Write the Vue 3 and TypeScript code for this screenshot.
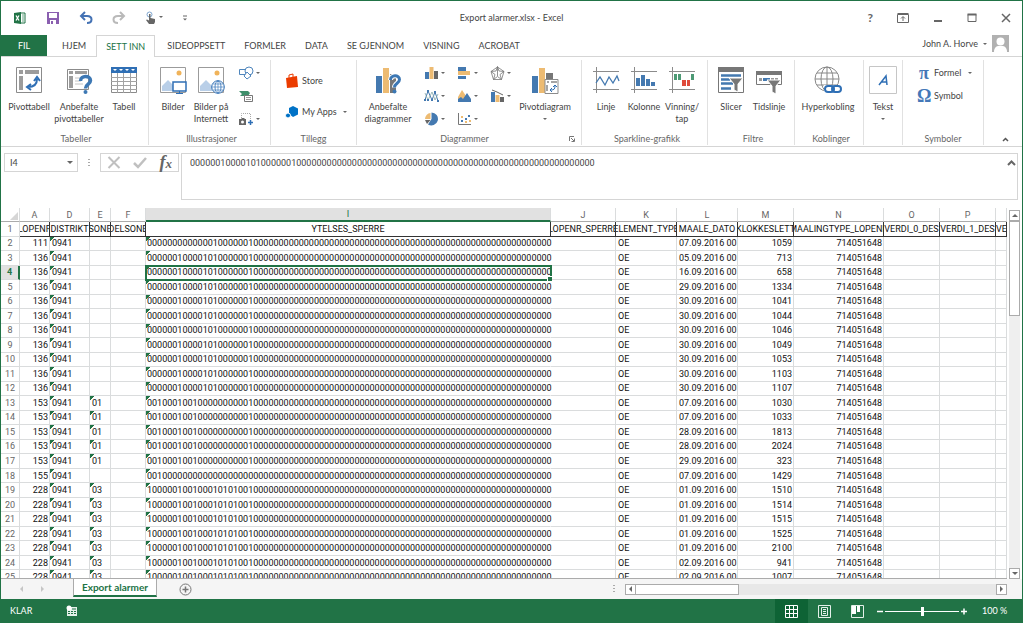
<script setup lang="ts">
import { ref } from 'vue'

interface Row {
  n: number
  a: string
  e: string
  i: string
  date: string
  time: string
}

const bits = (ones: number[]): string =>
  Array.from({ length: 80 }, (_, k) => (ones.includes(k) ? '1' : '0')).join('')

const patterns = {
  first: bits([13, 20]),
  second: bits([6, 11, 13, 20]),
  third: bits([2, 6, 9, 20]),
  fourth: bits([2]),
  fifth: bits([0, 6, 9, 13, 15, 17, 20]),
}

const source: [string, string, keyof typeof patterns, string, string][] = [
  ['111', '', 'first', '07.09.2016', '1059'],
  ['136', '', 'second', '05.09.2016', '713'],
  ['136', '', 'second', '16.09.2016', '658'],
  ['136', '', 'second', '29.09.2016', '1334'],
  ['136', '', 'second', '30.09.2016', '1041'],
  ['136', '', 'second', '30.09.2016', '1044'],
  ['136', '', 'second', '30.09.2016', '1046'],
  ['136', '', 'second', '30.09.2016', '1049'],
  ['136', '', 'second', '30.09.2016', '1053'],
  ['136', '', 'second', '30.09.2016', '1103'],
  ['136', '', 'second', '30.09.2016', '1107'],
  ['153', '01', 'third', '07.09.2016', '1030'],
  ['153', '01', 'third', '07.09.2016', '1033'],
  ['153', '01', 'third', '28.09.2016', '1813'],
  ['153', '01', 'third', '28.09.2016', '2024'],
  ['153', '01', 'third', '29.09.2016', '323'],
  ['155', '', 'fourth', '07.09.2016', '1429'],
  ['228', '03', 'fifth', '01.09.2016', '1510'],
  ['228', '03', 'fifth', '01.09.2016', '1514'],
  ['228', '03', 'fifth', '01.09.2016', '1515'],
  ['228', '03', 'fifth', '01.09.2016', '1525'],
  ['228', '03', 'fifth', '01.09.2016', '2100'],
  ['228', '03', 'fifth', '02.09.2016', '941'],
  ['228', '03', 'fifth', '02.09.2016', '1007'],
]

const rows: Row[] = source.map(([a, e, p, date, time], k) => ({
  n: k + 2, a, e, i: patterns[p], date: date + ' 00', time,
}))

const columns = [
  { id: 'A', title: 'LOPENR' },
  { id: 'D', title: 'DISTRIKT' },
  { id: 'E', title: 'SONE' },
  { id: 'F', title: 'DELSONE' },
  { id: 'I', title: 'YTELSES_SPERRE' },
  { id: 'J', title: 'LOPENR_SPERRE' },
  { id: 'K', title: 'ELEMENT_TYPE' },
  { id: 'L', title: 'MAALE_DATO' },
  { id: 'M', title: 'KLOKKESLETT' },
  { id: 'N', title: 'MAALINGTYPE_LOPENR' },
  { id: 'O', title: 'VERDI_0_DES' },
  { id: 'P', title: 'VERDI_1_DES' },
  { id: '', title: 'VE' },
]

const tabs = ['HJEM', 'SETT INN', 'SIDEOPPSETT', 'FORMLER', 'DATA', 'SE GJENNOM', 'VISNING', 'ACROBAT']
const activeTab = ref('SETT INN')
const formula = ref(patterns.second)
const cellName = ref('I4')
const zoom = ref(50)
</script>

<template>
  <div class="window">
    <header class="titlebar">
      <div class="qat">
        <svg class="logo" width="14" height="14" viewBox="0 0 14 14"><path d="M7 2h5v10H7z" fill="#fff" stroke="#217346" /><path d="M9 4h2M9 6h2M9 8h2M9 10h2" stroke="#6aa685" /><path d="M1 2l7-1v12l-7-1z" fill="#217346" /><path d="M3 4.500l3 5M6 4.500l-3 5" stroke="#fff" stroke-width="1.300" /></svg>
        <button aria-label="Lagre"><svg width="14" height="14" viewBox="0 0 14 14"><path d="M1 1h12v12H1z" fill="#8a5fb0" /><path d="M3 2h8v5H3z" fill="#fff" /><path d="M4 9h6v4H4z" fill="#fff" /><path d="M5 10h2v3H5z" fill="#8a5fb0" /></svg></button>
        <button aria-label="Angre"><svg width="14" height="14" viewBox="0 0 14 14" fill="none" stroke="#4472b4" stroke-width="2"><path d="M6 1L2 5l4 4M2 5h6c6 0 6 7 0 7" /></svg></button>
        <button aria-label="Gjør om"><svg width="14" height="14" viewBox="0 0 14 14" fill="none" stroke="#b9b9b9" stroke-width="2"><path d="M8 1l4 4-4 4M12 5H6c-6 0-6 7 0 7" /></svg></button>
        <button class="touch" aria-label="Berøringsmodus"><svg width="18" height="14" viewBox="0 0 18 14"><circle cx="4.500" cy="3.500" r="2.500" fill="none" stroke="#7fa6cf" /><path d="M4 3h1.500v4L10 8v3l-1 2H4L1 9l1-.5 2 1z" fill="#666" /><path d="M14 5h4l-2 2z" fill="#666" /></svg></button>
        <button aria-label="Tilpass verktøylinjen"><svg width="6" height="7" viewBox="0 0 6 7"><path d="M1 1h4" stroke="#666" /><path d="M1 3.500h4l-2 2z" fill="#666" /></svg></button>
      </div>
      <h1>Export alarmer.xlsx - Excel</h1>
      <div class="controls">
        <button class="help" aria-label="Hjelp">?</button>
        <button aria-label="Visningsalternativer"><svg width="12" height="10" viewBox="0 0 12 10" fill="none" stroke="#666"><path d="M.5 1.500h11v8H.5zM.5 .5h11M6 8V4M4 5.500l2-2 2 2" /></svg></button>
        <button aria-label="Minimer"><svg width="10" height="10" viewBox="0 0 10 10"><path d="M1 8h8" stroke="#666" stroke-width="2" /></svg></button>
        <button aria-label="Maksimer"><svg width="10" height="10" viewBox="0 0 10 10"><path d="M1 1.500h8v7H1z" fill="none" stroke="#666" /><path d="M.5 1.500h9" stroke="#666" stroke-width="2" /></svg></button>
        <button aria-label="Lukk"><svg width="10" height="10" viewBox="0 0 10 10"><path d="M1 1l8 8M9 1L1 9" stroke="#666" stroke-width="1.500" /></svg></button>
      </div>
    </header>

    <nav class="tabs">
      <button class="file">FIL</button>
      <button v-for="t in tabs" :key="t" class="tab" :class="{ active: t === activeTab }" @click="activeTab = t">{{ t }}</button>
      <button class="user">
        <span>John A. Horve</span><i class="caret"></i>
        <svg width="17" height="17" viewBox="0 0 17 17"><path d="M0 0h17v17H0z" fill="#b1b1b1" /><circle cx="8.500" cy="6.500" r="4" fill="#fff" /><path d="M2 17c0-4 2-5.500 4-6h5c2 .5 4 2 4 6z" fill="#fff" /></svg>
      </button>
    </nav>

    <section class="ribbon">
      <div class="group g-tables">
        <div class="tools">
          <button class="big w50"><svg width="28" height="28" viewBox="0 0 28 28"><path d="M1.500 1.500h25v25h-25z" fill="#fff" stroke="#8b8b8b" /><path d="M4 4h4v4H4zM10 4h14v4H10zM4 10h4v14H4z" fill="#9c9c9c" /><path d="M13 21c6 0 9-3 9-8M19 15l3-4 3 4M16 18l-4 3 4 3" fill="none" stroke="#2f6fb5" stroke-width="2" /></svg><span>Pivottabell</span></button>
          <button class="big w50"><svg width="28" height="28" viewBox="0 0 28 28"><path d="M2.500 3.500h21v20h-21z" fill="#fff" stroke="#8b8b8b" /><path d="M4 5h4v3H4zM10 5h12v3H10zM4 10h4v12H4z" fill="#9c9c9c" /><path d="M10 12h6M10 15h6M10 18h8" stroke="#c4c4c4" /><path d="M15.500 15c0-6 10-6 10-.5 0 4-5 3.500-5 8" fill="none" stroke="#3d78b4" stroke-width="3.500" /><circle cx="20.500" cy="26" r="2" fill="#3d78b4" /></svg><span>Anbefalte<br>pivottabeller</span></button>
          <button class="big w40"><svg width="28" height="28" viewBox="0 0 28 28"><path d="M1.500 1.500h25v25h-25z" fill="#fff" stroke="#8b8b8b" /><path d="M1 1h26v6H1z" fill="#2f6fb5" /><path d="M3 3h4l-2 2zM9 3h4l-2 2zM15 3h4l-2 2zM21 3h4l-2 2z" fill="#fff" /><path d="M1 11.500h26M1 15.500h26M1 19.500h26M1 23.500h26M7.500 7v20M13.500 7v20M20.500 7v20" stroke="#a3a3a3" /></svg><span>Tabell</span></button>
        </div>
        <h2>Tabeller</h2>
      </div>

      <div class="group g-illus">
        <div class="tools">
          <button class="big w40"><svg width="28" height="28" viewBox="0 0 28 28"><path d="M1.500 1.500h25v25h-25z" fill="#fff" stroke="#9b9b9b" /><circle cx="20" cy="7" r="2.500" fill="#f0b35a" /><path d="M3 25v-5l6-6 6 6v5z" fill="#b9cfe8" /><path d="M14 16h13v9H14z" fill="#fff" stroke="#2f6fb5" stroke-width="1.500" /><path d="M20.500 25v2M17 27.500h7" stroke="#2f6fb5" /></svg><span>Bilder</span></button>
          <button class="big w36"><svg width="28" height="28" viewBox="0 0 28 28"><path d="M1.500 1.500h25v25h-25z" fill="#fff" stroke="#9b9b9b" /><circle cx="20" cy="7" r="2.500" fill="#f0b35a" /><path d="M3 25v-5l6-6 6 6v5z" fill="#b9cfe8" /><circle cx="21" cy="21" r="6.300" fill="#fff" stroke="#2f6fb5" /><ellipse cx="21" cy="21" rx="3" ry="6" fill="none" stroke="#2f6fb5" stroke-width=".8" /><path d="M15 21h12M16 18h10M16 24h10M21 15v12" stroke="#2f6fb5" stroke-width=".6" /></svg><span>Bilder på<br>Internett</span></button>
          <div class="stack">
            <button aria-label="Figurer"><svg width="15" height="14" viewBox="0 0 15 14" fill="#fff" stroke="#4f86bd"><path d="M.5 3.500h8v5h-8z" /><circle cx="10" cy="5" r="4" /><path d="M8 6l4 4-4 3-3-3z" /></svg><i class="caret"></i></button>
            <button aria-label="SmartArt"><svg width="15" height="14" viewBox="0 0 15 14"><path d="M0 2h9l2 2-2 3H1l2-2z" fill="#3f8f6b" /><path d="M5.500 6.500h8v6h-8z" fill="#fff" stroke="#777" /><path d="M7 8.500h5M7 10.500h5" stroke="#999" /></svg></button>
            <button aria-label="Skjermbilde"><svg width="15" height="14" viewBox="0 0 15 14"><path d="M2.500 6V1.500h9V7" fill="none" stroke="#aaa" stroke-dasharray="1 1" /><path d="M0 7h2l1-1h2l1 1h1v6H0z" fill="#666" /><circle cx="3.500" cy="10" r="1.500" fill="#fff" /><path d="M9 10.500h5M11.500 8v5" stroke="#2f6fb5" stroke-width="1.500" /></svg><i class="caret"></i></button>
          </div>
        </div>
        <h2>Illustrasjoner</h2>
      </div>

      <div class="group g-apps">
        <div class="tools apps">
          <button><svg width="14" height="16" viewBox="0 0 14 16"><path d="M1 5l11-2 1 11-11 1z" fill="#eb3c00" /><path d="M4 6V2l4-1v4" fill="none" stroke="#eb3c00" /></svg><span>Store</span></button>
          <button><svg width="14" height="14" viewBox="0 0 14 14" fill="#0072c6"><path d="M8 1l5 2.500v6L8 12 4 9V3z" /><circle cx="3" cy="10.500" r="2.500" stroke="#fff" /></svg><span>My Apps</span><i class="caret"></i></button>
        </div>
        <h2>Tillegg</h2>
      </div>

      <div class="group g-charts">
        <div class="tools">
          <button class="big w56"><svg width="28" height="28" viewBox="0 0 28 28"><path d="M2 10h6v17H2z" fill="#4479b0" /><path d="M9 2h6v25H9z" fill="#edbb72" /><path d="M16 8h6v19h-6z" fill="#777" /><path d="M16.500 14c0-5.500 9-5.500 9-.5 0 4-5 3.500-5 8" fill="none" stroke="#fff" stroke-width="5" /><path d="M16.500 14c0-5.500 9-5.500 9-.5 0 4-5 3.500-5 8" fill="none" stroke="#3d78b4" stroke-width="3" /><circle cx="20.500" cy="25.500" r="2" fill="#3d78b4" /></svg><span>Anbefalte<br>diagrammer</span></button>
          <div class="charts">
            <button aria-label="Stolpe"><svg width="15" height="14" viewBox="0 0 15 14"><path d="M1 6h4v7H1z" fill="#4479b0" /><path d="M5.500 1h4v12h-4z" fill="#edbb72" /><path d="M10 5h4v8h-4z" fill="#666" /></svg><i class="caret"></i></button>
            <button aria-label="Liggende stolpe"><svg width="15" height="14" viewBox="0 0 15 14"><path d="M1 1h8v4H1zM1 10h8v3H1z" fill="#4479b0" /><path d="M1 5h12v4H1z" fill="#edbb72" /></svg><i class="caret"></i></button>
            <button aria-label="Radar"><svg width="15" height="14" viewBox="0 0 15 14" fill="none" stroke="#777" stroke-width=".8"><path d="M7.500 .5L9 5l5 .5-4 3 1.500 5-4-3-4 3L5 8.500l-4-3L6 5zM7.500 1l6.500 4.500-2.500 8h-8L1 5.500zM7.500 1v9" /></svg><i class="caret"></i></button>
            <button aria-label="Linje"><svg width="15" height="14" viewBox="0 0 15 14" fill="none" stroke="#4479b0"><path d="M1 11l3-9 4 9 3-8 3 9" /><path d="M1 4l3 7 4-8 3 8 3-6" stroke="#8aa" stroke-width=".8" /><path d="M3 2h2M7 11h2M10 3h2M0 11h2M3 11h2M13 12h2" stroke-width="2" /></svg><i class="caret"></i></button>
            <button aria-label="Areal"><svg width="15" height="14" viewBox="0 0 15 14"><path d="M1 8l4-7 4 6v6H1z" fill="#edbb72" /><path d="M1 13V10l3-2 2 2 4-6 4 6v3z" fill="#4479b0" /></svg><i class="caret"></i></button>
            <button aria-label="Kombinasjon"><svg width="15" height="14" viewBox="0 0 15 14"><path d="M1 3h4v10H1z" fill="#4479b0" /><path d="M5.500 6h4v7h-4z" fill="#edbb72" /><path d="M10 8h4v5h-4z" fill="#666" /><path d="M2 1l5 2 6 3" fill="none" stroke="#666" /></svg><i class="caret"></i></button>
            <button aria-label="Sektor"><svg width="15" height="14" viewBox="0 0 15 14"><path d="M7.500 7V.5A6.500 6.500 0 1 1 4 12.500z" fill="#4479b0" /><path d="M6.500 7H1A6 6 0 0 1 6.500 1z" fill="#edbb72" /><path d="M1 8h5.500L3 12z" fill="#666" /></svg><i class="caret"></i></button>
            <button aria-label="Punkt"><svg width="15" height="14" viewBox="0 0 15 14"><path d="M1.500 1v11.500H14" fill="none" stroke="#777" /><path d="M4 8h2v2H4zM8 6h2v2H8zM11 3h2v2h-2z" fill="#4479b0" /><path d="M4 4h2v2H4zM8 9h2v2H8zM12 8h2v2h-2z" fill="#edbb72" /></svg><i class="caret"></i></button>
          </div>
          <button class="big w54"><svg width="28" height="28" viewBox="0 0 28 28"><path d="M1 10h6v17H1z" fill="#4479b0" /><path d="M8 2h6v25H8z" fill="#edbb72" /><path d="M15 7h7v8h-7z" fill="#777" /><path d="M14 13.500h13v14H14z" fill="#fff" stroke="#8b8b8b" /><path d="M16 16h2M20 16h6M16 19v6" stroke="#888" stroke-width="1.500" /><path d="M20 24c3 0 4-1 4-4M22 21l2-2 2 2M21 22l-2 2 2 2" fill="none" stroke="#2f6fb5" /></svg><span>Pivotdiagram</span><i class="caret"></i></button>
        </div>
        <div class="foot"><h2>Diagrammer</h2><button class="launcher" aria-label="Flere diagrammer"><svg width="6" height="6" viewBox="0 0 6 6" fill="none" stroke="#777"><path d="M.5 5V.5H5M2 2l3 3M5.500 2.500v3h-3" /></svg></button></div>
      </div>

      <div class="group g-spark">
        <div class="tools">
          <button class="big w38"><svg width="28" height="28" viewBox="0 0 28 28" fill="none"><path d="M4.500 1v26M1 5.500h26M1 23.500h26" stroke="#8b8b8b" /><path d="M4 17l4-6 5 8 4-8 4 6 4-7 2 5" stroke="#4479b0" stroke-width="1.300" /></svg><span>Linje</span></button>
          <button class="big w38"><svg width="28" height="28" viewBox="0 0 28 28"><path d="M4.500 1v26M1 5.500h26M1 23.500h26" stroke="#8b8b8b" /><path d="M6 12h4v8H6zM11 9h4v11h-4zM16 13h4v7h-4zM21 16h4v4h-4z" fill="#4479b0" /></svg><span>Kolonne</span></button>
          <button class="big w38"><svg width="28" height="28" viewBox="0 0 28 28"><path d="M4.500 1v26M1 5.500h26M1 23.500h26" stroke="#8b8b8b" /><path d="M6 8h3v6H6zM10 8h3v6h-3zM23 8h3v6h-3z" fill="#4d9a75" /><path d="M14 14h4v6h-4zM19 14h3v6h-3z" fill="#df4b3b" /></svg><span>Vinning/<br>tap</span></button>
        </div>
        <h2>Sparkline-grafikk</h2>
      </div>

      <div class="group g-filter">
        <div class="tools">
          <button class="big w38"><svg width="28" height="28" viewBox="0 0 28 28"><path d="M1.500 1.500h25v25h-25z" fill="#fff" stroke="#777" /><path d="M1 1h26v5H1z" fill="#777" /><path d="M4 9.500h20M4 13.500h9M4 17.500h12M4 22.500h10" stroke="#4479b0" stroke-width="2.500" /><path d="M12 12h14l-5 6v8l-4-2v-6z" fill="#777" stroke="#fff" /></svg><span>Slicer</span></button>
          <button class="big w38"><svg width="28" height="28" viewBox="0 0 28 28"><path d="M1.500 5.500h25v13h-25z" fill="#fff" stroke="#777" /><path d="M1 5h26v4H1z" fill="#777" /><path d="M4 13.500h3M16 13.500h3M20 13.500h3" stroke="#999" stroke-width="3" /><path d="M8 13.500h7" stroke="#4479b0" stroke-width="3" /><path d="M12 14h14l-5 6v8l-4-2v-6z" fill="#777" stroke="#fff" /></svg><span>Tidslinje</span></button>
        </div>
        <h2>Filtre</h2>
      </div>

      <div class="group g-link">
        <div class="tools">
          <button class="big w58"><svg width="28" height="28" viewBox="0 0 28 28" fill="none"><g stroke="#888"><circle cx="13" cy="13" r="12" /><ellipse cx="13" cy="13" rx="6" ry="12" /><path d="M13 1v24M1 13h24M3 7h20M3 19h20" /></g><path d="M10 19h18v8H10z" fill="#fff" /><g stroke="#2f6fb5" stroke-width="2"><rect x="11" y="20" width="9" height="6" rx="3" /><rect x="18" y="20" width="9" height="6" rx="3" /></g></svg><span>Hyperkobling</span></button>
        </div>
        <h2>Koblinger</h2>
      </div>

      <div class="group g-text">
        <div class="tools">
          <button class="big w32"><svg width="28" height="28" viewBox="0 0 28 28" fill="none"><path d="M.5 .5h27v27H.5z" stroke="#c6c6c6" /><path d="M10 19l7-9 1 9M12 16h6" stroke="#2f6fb5" stroke-width="1.500" /></svg><span>Tekst</span><i class="caret"></i></button>
        </div>
      </div>

      <div class="group g-symbols">
        <div class="tools symbols">
          <button><b>π</b><span>Formel</span><i class="caret"></i></button>
          <button><b>Ω</b><span>Symbol</span></button>
        </div>
        <h2>Symboler</h2>
      </div>
      <button class="collapse" aria-label="Skjul båndet"><svg width="7" height="5" viewBox="0 0 7 5"><path d="M1 4l2.500-2.500L6 4" fill="none" stroke="#555" stroke-width="1.500" /></svg></button>
    </section>

    <section class="formula-row">
      <label class="namebox"><input v-model="cellName" aria-label="Navneboks"><i class="caret wide"></i></label>
      <i class="dots"></i>
      <div class="fx">
        <button aria-label="Avbryt"><svg width="14" height="13" viewBox="0 0 14 13"><path d="M1.500 1l11 11M12.500 1l-11 11" stroke="#c0c0c0" stroke-width="2" /></svg></button>
        <button aria-label="Skriv inn"><svg width="14" height="13" viewBox="0 0 14 13"><path d="M1 7l4 4 8-9" fill="none" stroke="#c0c0c0" stroke-width="2.500" /></svg></button>
        <button class="fn" aria-label="Sett inn funksjon">f<small>x</small></button>
      </div>
      <div class="formula">
        <textarea v-model="formula" aria-label="Formellinje"></textarea>
        <button aria-label="Skjul formellinjen"><svg width="9" height="6" viewBox="0 0 9 6"><path d="M1 5l3.500-3.500L8 5" fill="none" stroke="#666" stroke-width="2" /></svg></button>
      </div>
    </section>

    <main class="sheet">
      <div class="grid">
        <table>
          <colgroup><col class="c-n"><col v-for="c in columns" :key="c.title" :class="'c-' + (c.id || 'q')"></colgroup>
          <thead>
            <tr><th class="corner"><svg width="8" height="8" viewBox="0 0 8 8"><path d="M8 0v8H0z" fill="#d6d6d6" /></svg></th><th v-for="c in columns" :key="c.title" :class="{ on: c.id === 'I' }">{{ c.id }}</th></tr>
          </thead>
          <tbody>
            <tr class="titles"><th>1</th><td v-for="c in columns" :key="c.title"><div>{{ c.title }}</div></td></tr>
            <tr v-for="r in rows" :key="r.n">
              <th :class="{ on: r.n === 4 }">{{ r.n }}</th>
              <td class="num">{{ r.a }}</td>
              <td class="flag">0941</td>
              <td :class="{ flag: r.e }">{{ r.e }}</td>
              <td></td>
              <td class="flag long" :class="{ selected: r.n === 4 }">{{ r.i }}</td>
              <td></td>
              <td>OE</td>
              <td class="num">{{ r.date }}</td>
              <td class="num">{{ r.time }}</td>
              <td class="num">714051648</td>
              <td></td><td></td><td></td>
            </tr>
          </tbody>
        </table>
      </div>
      <div class="vscroll">
        <button aria-label="Rull opp"><i class="caret up"></i></button>
        <div class="thumb"></div>
        <button class="end" aria-label="Rull ned"><i class="caret wide"></i></button>
      </div>
    </main>

    <div class="sheetbar">
      <div class="nav"><button aria-label="Forrige ark"><i class="caret left dim"></i></button><button aria-label="Neste ark"><i class="caret right dim"></i></button></div>
      <button class="sheet-tab">Export alarmer</button>
      <button class="add" aria-label="Nytt ark"><svg width="13" height="13" viewBox="0 0 13 13" fill="none" stroke="#777"><circle cx="6.500" cy="6.500" r="5.500" /><path d="M3.500 6.500h6M6.500 3.500v6" stroke-width="1.500" /></svg></button>
      <i class="dots"></i>
      <div class="hscroll">
        <button aria-label="Rull til venstre"><i class="caret left"></i></button>
        <div class="thumb"></div>
        <button class="end" aria-label="Rull til høyre"><i class="caret right"></i></button>
      </div>
    </div>

    <footer class="status">
      <span>KLAR</span>
      <button class="macro" aria-label="Makroopptak"><svg width="12" height="12" viewBox="0 0 12 12"><path d="M1 2h10v9H1z" fill="#e4f0e9" /><path d="M2 6.500h8M2 8.500h8" stroke="#217346" stroke-dasharray="2 1" /><path d="M6 4h4" stroke="#217346" /><circle cx="3" cy="3" r="2.500" fill="#fff" /></svg></button>
      <div class="views">
        <button class="on" aria-label="Normal"><svg width="13" height="13" viewBox="0 0 13 13" fill="none" stroke="#fff"><path d="M.5 .5h12v12H.5zM.5 4.500h12M.5 8.500h12M4.500 .5v12M8.500 .5v12" /></svg></button>
        <button aria-label="Sideoppsett"><svg width="13" height="13" viewBox="0 0 13 13" fill="none" stroke="#e4f0e9"><path d="M.5 .5h12v12H.5zM3.500 2.500h6v8h-6zM5 4.500h3M5 6.500h3M5 8.500h3" /></svg></button>
        <button aria-label="Sideskift"><svg width="13" height="13" viewBox="0 0 13 13"><path d="M.5 .5h12v12H.5z" fill="none" stroke="#e4f0e9" /><path d="M1 1h4v8H1zM6 1h3v6H6z" fill="#fff" /></svg></button>
      </div>
      <button class="step" aria-label="Zoom ut"><svg width="6" height="7" viewBox="0 0 6 7"><path d="M0 3.500h6" stroke="#fff" stroke-width="1.500" /></svg></button>
      <input v-model="zoom" type="range" aria-label="Zoom">
      <button class="step" aria-label="Zoom inn"><svg width="6" height="7" viewBox="0 0 6 7"><path d="M0 3.500h6M3 .5v6" stroke="#fff" stroke-width="1.500" /></svg></button>
      <button class="percent">100 %</button>
    </footer>
  </div>
</template>

<style>
body { margin: 0; }
</style>

<style scoped>
* { box-sizing: border-box; }
.window {
  display: flex; flex-direction: column; height: 100vh; overflow: hidden;
  border: 1px solid #217346; border-bottom: 0; background: #fff; color: #444;
  font-family: Lato, "Open Sans", sans-serif; font-size: 9px; line-height: 12px;
}
button { margin: 0; padding: 0; border: 0; background: none; color: inherit; font: inherit; line-height: inherit; }
h1, h2 { margin: 0; font-size: 9px; font-weight: 400; }
svg { display: block; flex: none; }
.caret { display: block; flex: none; width: 0; height: 0; border: 2px solid transparent; border-top-color: #666; border-bottom: 0; }
.caret.wide { border-width: 3px 3px 0; }
.caret.up { border: 3px solid transparent; border-top: 0; border-bottom-color: #666; }
.caret.left { border: 3px solid transparent; border-left: 0; border-right-color: #666; }
.caret.right { border: 3px solid transparent; border-right: 0; border-left-color: #666; }
.caret.left.dim { border-right-color: #c6c6c6; }
.caret.right.dim { border-left-color: #c6c6c6; }
.dots { flex: none; width: 2px; height: 8px; background: repeating-linear-gradient(#aaa 0 1px, transparent 1px 3px); }

.titlebar { display: grid; grid-template-columns: 1fr auto 1fr; align-items: center; flex: none; height: 34px; }
.qat { display: flex; align-items: center; gap: 19px; padding-left: 12px; }
.controls { display: flex; align-items: center; justify-content: flex-end; gap: 24px; padding-right: 11px; }
.help { font-size: 12px; font-weight: 700; color: #666; }

.tabs { display: flex; flex: none; height: 22px; border-bottom: 1px solid #d5d5d5; }
.file { width: 46px; background: #217346; color: #fff; }
.tab { margin-bottom: -1px; padding: 0 9px 0 10px; }
.file + .tab { padding: 0 10px 0 15px; }
.tab.active { margin-right: 2px; padding: 0 9px; border: 1px solid #d5d5d5; border-bottom: 0; background: #fff; color: #217346; }
.user { display: flex; align-items: center; gap: 5px; margin-left: auto; padding: 0 13px 4px 0; }

.ribbon { display: flex; flex: none; height: 90px; padding-top: 3px; border-bottom: 1px solid #d5d5d5; }
.group { display: flex; flex-direction: column; flex: none; height: 85px; border-right: 1px solid #e1e1e1; }
.tools { display: flex; flex: 1; padding-top: 2px; }
.group h2 { text-align: center; color: #666; height: 12px; }
.foot { display: flex; }
.foot h2 { flex: 1; }
.launcher { margin-right: 6px; }
.g-tables { width: 148px; padding-left: 3px; }
.g-illus { width: 122px; padding-left: 4px; }
.g-apps { width: 86px; }
.g-charts { width: 225px; padding-left: 3px; }
.g-spark { width: 126px; padding-left: 5px; }
.g-filter { width: 87px; padding-left: 4px; }
.g-link { width: 69px; padding-left: 4px; }
.g-text { width: 39px; padding-left: 3px; }
.g-symbols { width: 81px; }
.big { display: flex; flex: none; flex-direction: column; align-items: center; padding-top: 4px; white-space: nowrap; }
.big span { margin-top: 7px; }
.big .caret { margin-top: 5px; }
.w32 { width: 32px; }
.w36 { width: 36px; }
.w38 { width: 38px; }
.w40 { width: 40px; }
.w50 { width: 50px; }
.w54 { width: 54px; }
.w56 { width: 56px; }
.w58 { width: 58px; }
.stack { display: flex; flex-direction: column; gap: 9px; padding: 4px 0 0 10px; }
.stack button, .charts button { display: flex; align-items: center; gap: 2px; }
.charts { display: grid; grid-template-columns: 33px 33px 28px; grid-auto-rows: 14px; gap: 9px 0; padding: 4px 0 0 8px; }
.apps { flex-direction: column; gap: 16px; padding: 13px 0 0 14px; }
.apps button, .symbols button { display: flex; align-items: center; gap: 3px; }
.apps .caret { margin-left: 3px; }
.symbols { flex-direction: column; gap: 5px; padding: 4px 0 0 14px; }
.symbols b { width: 14px; color: #4478b8; font: 700 18px/18px "Liberation Serif", serif; }
.symbols .caret { margin-left: 4px; }
.collapse { align-self: flex-end; margin: 0 13px 4px auto; }

.formula-row { display: flex; flex: none; height: 61px; padding: 6px 4px 8px 3px; }
.namebox { display: flex; align-items: center; width: 74px; height: 19px; padding: 0 4px 0 5px; border: 1px solid #d5d5d5; }
.namebox input { flex: 1; min-width: 0; padding: 0; border: 0; outline: 0; color: #444; font: inherit; }
.formula-row .dots { margin: 6px 10px 0 10px; }
.fx { display: flex; align-items: center; justify-content: space-between; width: 79px; height: 19px; padding: 0 6px; border: 1px solid #d5d5d5; }
.fn { color: #666; font: italic 700 18px/17px "Liberation Serif", serif; }
.fn small { font-size: 13px; }
.formula { display: flex; flex: 1; align-items: flex-start; margin-left: 2px; border: 1px solid #d5d5d5; }
.formula textarea { flex: 1; height: 44px; padding: 3px 8px; border: 0; outline: 0; resize: none; color: #444; font: 9px/12px Roboto, sans-serif; overflow: hidden; }
.formula button { padding: 6px 1px; }

.sheet { display: flex; flex: 1; min-height: 0; font-family: Roboto, sans-serif; color: #111; }
.grid { flex: 1; min-width: 0; overflow: hidden; border-bottom: 1px solid #ababab; }
table { width: 100%; height: 377px; border-spacing: 0; table-layout: fixed; }
.c-n { width: 19px; }
.c-A { width: 30px; }
.c-D { width: 40px; }
.c-E { width: 21px; }
.c-F { width: 35px; }
.c-I { width: 405px; }
.c-J { width: 65px; }
.c-K, .c-L { width: 61px; }
.c-M { width: 56px; }
.c-N { width: 90px; }
.c-O, .c-P { width: 56px; }
th, td { height: 14px; padding: 0 1px; border: solid #dadcdd; border-width: 0 1px 1px 0; line-height: 12px; white-space: nowrap; }
td { padding-left: 2px; }
th { color: #666; font-weight: 400; text-align: center; }
thead th { border-bottom-color: #ababab; }
thead th.on { border-bottom: 2px solid #217346; background: #e1e1e1; color: #217346; }
tbody th.on { border-right: 2px solid #217346; background: #e1e1e1; color: #217346; font-weight: 700; }
.corner svg { margin: 2px 0 0 8px; }
.titles td { padding: 0; border-color: #333; }
.titles div { display: flex; justify-content: center; overflow: hidden; }
.titles td:last-child div { justify-content: flex-start; }
.num { text-align: right; }
.flag { background: linear-gradient(135deg, #217346 3px, transparent 3px) no-repeat; }
.long { padding-left: 1px; border-right-color: transparent; }
.selected { position: relative; outline: 2px solid #217346; outline-offset: -1px; }
.selected::after { content: ""; position: absolute; right: -2px; bottom: -2px; width: 4px; height: 4px; border: solid #fff; border-width: 1px 0 0 1px; background: #217346; }
.vscroll { display: flex; flex-direction: column; width: 11px; margin: 2px 2px 0 2px; background: #efefef; }
.vscroll button, .hscroll button { display: flex; flex: none; align-items: center; justify-content: center; width: 11px; height: 11px; border: 1px solid #ababab; background: #fff; }
.vscroll .thumb { height: 95px; border: 1px solid #ababab; background: #fff; }
.vscroll .end { margin-top: auto; }

.sheetbar { display: flex; flex: none; align-items: center; height: 20px; padding-right: 15px; background: #f5f5f5; }
.nav { display: flex; justify-content: space-between; width: 72px; padding: 0 29px 0 19px; }
.sheet-tab { align-self: flex-start; width: 84px; height: 18px; border: solid #ababab; border-width: 0 1px; border-bottom: 2px solid #217346; background: #fff; color: #217346; font: 700 10px/16px Lato, sans-serif; }
.add { margin-left: 22px; }
.sheetbar .dots { margin-left: auto; }
.hscroll { display: flex; width: 382px; margin-left: 10px; background: #e8e8e8; }
.hscroll .thumb { width: 103px; border: 1px solid #ababab; border-left: 0; background: #fff; }
.hscroll .end { margin-left: auto; }

.status { display: flex; flex: none; align-items: center; height: 24px; padding: 0 17px 0 9px; background: #217346; color: #fff; }
.macro { margin-left: 34px; }
.views { display: flex; align-self: stretch; margin-left: auto; }
.views button { display: flex; align-items: center; justify-content: center; width: 33px; }
.views .on { background: #0e6335; }
.step { margin: 0 2px; }
.views + .step { margin-left: 3px; }
.status input { width: 74px; height: 12px; margin: 0; appearance: none; background: linear-gradient(#fff, #fff) center / 100% 1px no-repeat; }
.status input::-webkit-slider-thumb { appearance: none; width: 3px; height: 9px; background: #fff; }
.percent { width: 23px; margin-left: 13px; white-space: nowrap; }
</style>
